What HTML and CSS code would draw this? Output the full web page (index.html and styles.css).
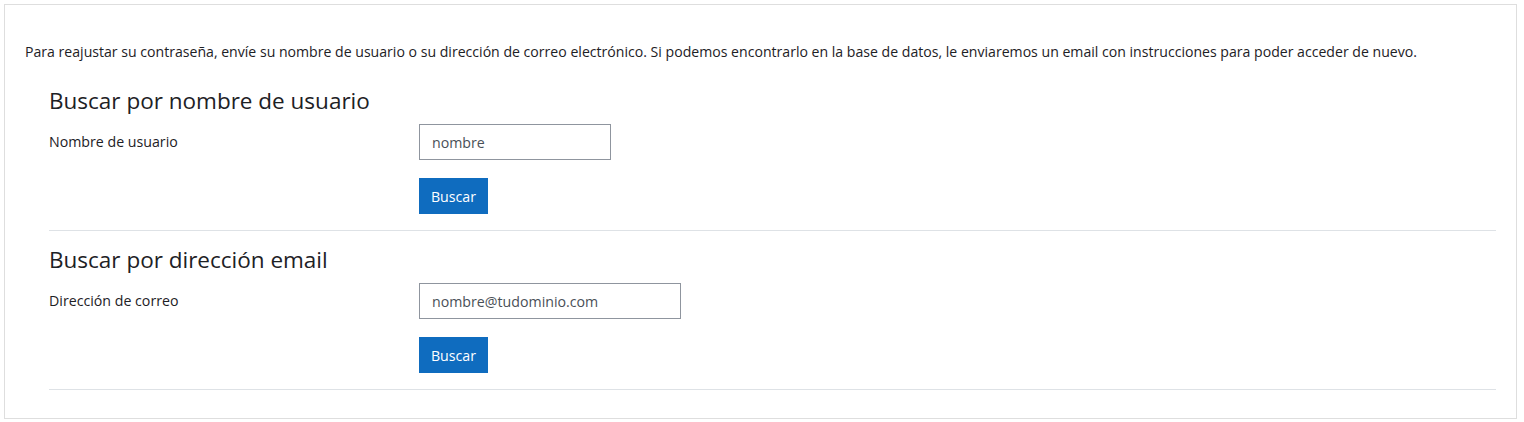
FILE: index.html
```html
<!DOCTYPE html>
<html lang="es">
<head>
<meta charset="utf-8">
<title>Olvidó su contraseña</title>
<link rel="stylesheet" href="styles.css">
</head>
<body>
<div class="card">
  <p class="intro">Para reajustar su contraseña, envíe su nombre de usuario o su dirección de correo electrónico. Si podemos encontrarlo en la base de datos, le enviaremos un email con instrucciones para poder acceder de nuevo.</p>

  <section class="search">
    <h3 class="search-title">Buscar por nombre de usuario</h3>
    <div class="form-row">
      <label class="form-label" for="username">Nombre de usuario</label>
      <input class="form-input input-user" id="username" type="text" placeholder="nombre">
    </div>
    <div class="form-row">
      <span class="form-label"></span>
      <button class="btn" type="button">Buscar</button>
    </div>
  </section>

  <section class="search">
    <h3 class="search-title">Buscar por dirección email</h3>
    <div class="form-row">
      <label class="form-label" for="email">Dirección de correo</label>
      <input class="form-input input-email" id="email" type="text" placeholder="nombre@tudominio.com">
    </div>
    <div class="form-row">
      <span class="form-label"></span>
      <button class="btn" type="button">Buscar</button>
    </div>
  </section>
</div>
</body>
</html>
```

FILE: styles.css
```css
* { box-sizing: border-box; }

html, body {
  margin: 0;
  padding: 0;
  background: #ffffff;
}

body {
  padding: 4px 7px 3px 4px;
  font-family: "Open Sans", "Noto Sans", "Liberation Sans", sans-serif;
  color: #1d2125;
}

.card {
  border: 1px solid #dedede;
  padding: 36px 20px 28px 20px;
  height: 415px;
}

.intro {
  margin: 0;
  font-size: 14.1px;
  line-height: 22px;
}

.search {
  margin-left: 24px;
  border-bottom: 1px solid #dee2e6;
  padding-bottom: 16px;
}

.search-title {
  margin: 24px 0 10px 0;
  font-size: 22.5px;
  font-weight: 400;
  line-height: 27px;
}

.search + .search .search-title {
  margin-top: 15px;
}

.form-row {
  display: grid;
  grid-template-columns: 370px auto;
  justify-content: start;
  align-items: center;
  margin-bottom: 18px;
}

.form-row:last-child {
  margin-bottom: 0;
}

.form-label {
  font-size: 14.2px;
  line-height: 20px;
}

.form-input {
  height: 36px;
  border: 1px solid #8f959e;
  border-radius: 0;
  padding: 0 12px;
  font-family: inherit;
  font-size: 14.2px;
  color: #495057;
  background: #fff;
  outline: none;
}

.form-input::placeholder {
  color: #495057;
  opacity: 1;
}

.input-user { width: 192px; }
.input-email { width: 262px; }

.btn {
  width: 69px;
  height: 36px;
  border: 0;
  border-radius: 0;
  background: #0f6cbf;
  color: #ffffff;
  font-family: inherit;
  font-size: 14.2px;
  padding: 0;
}
```
